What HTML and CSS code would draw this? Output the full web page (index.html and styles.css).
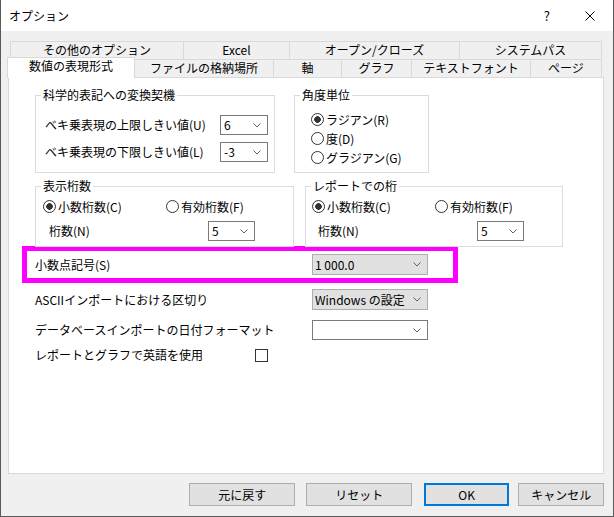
FILE: index.html
```html
<!DOCTYPE html>
<html lang="ja">
<head>
  <meta charset="UTF-8">
  <meta name="viewport" content="width=device-width, initial-scale=1.0">
  <title>オプション</title>
  <link rel="stylesheet" href="styles.css">
</head>
<body>
  <div class="window">
    <div class="titlebar">
      <span class="title">オプション</span>
      <span class="help">?</span>
      <svg class="close" width="10" height="10" viewBox="0 0 10 10">
        <path d="M0.5 0.5 L9.5 9.5 M9.5 0.5 L0.5 9.5" stroke="#000" stroke-width="1" fill="none"/>
      </svg>
    </div>

    <div class="content">
      <div class="tab-row row-back">
        <div class="tab">その他のオプション</div>
        <div class="tab">Excel</div>
        <div class="tab">オープン/クローズ</div>
        <div class="tab">システムパス</div>
      </div>
      <div class="tab-row row-front">
        <div class="tab active">数値の表現形式</div>
        <div class="tab">ファイルの格納場所</div>
        <div class="tab">軸</div>
        <div class="tab">グラフ</div>
        <div class="tab">テキストフォント</div>
        <div class="tab">ページ</div>
      </div>

      <div class="page">
        <div class="group-row">
          <div class="group group-sci">
            <span class="group-title">科学的表記への変換契機</span>
            <div class="group-field">
              <span class="field-label">ベキ乗表現の上限しきい値(U)</span>
              <div class="combo combo-small"><span>6</span><svg class="chev" width="8" height="5" viewBox="0 0 8 5"><polyline points="0.5,0.5 4,4 7.5,0.5" fill="none" stroke="#606060"/></svg></div>
            </div>
            <div class="group-field">
              <span class="field-label">ベキ乗表現の下限しきい値(L)</span>
              <div class="combo combo-small"><span>-3</span><svg class="chev" width="8" height="5" viewBox="0 0 8 5"><polyline points="0.5,0.5 4,4 7.5,0.5" fill="none" stroke="#606060"/></svg></div>
            </div>
          </div>

          <div class="group group-angle">
            <span class="group-title">角度単位</span>
            <div class="radio-item"><span class="radio checked"></span>ラジアン(R)</div>
            <div class="radio-item"><span class="radio"></span>度(D)</div>
            <div class="radio-item"><span class="radio"></span>グラジアン(G)</div>
          </div>
        </div>

        <div class="group-row row-digits">
          <div class="group group-digits">
            <span class="group-title">表示桁数</span>
            <div class="radio-line">
              <div class="radio-item first"><span class="radio checked"></span>小数桁数(C)</div>
              <div class="radio-item"><span class="radio"></span>有効桁数(F)</div>
            </div>
            <div class="digits-row">
              <span class="digits-label">桁数(N)</span>
              <div class="combo combo-digits"><span>5</span><svg class="chev" width="8" height="5" viewBox="0 0 8 5"><polyline points="0.5,0.5 4,4 7.5,0.5" fill="none" stroke="#606060"/></svg></div>
            </div>
          </div>

          <div class="group group-report">
            <span class="group-title">レポートでの桁</span>
            <div class="radio-line">
              <div class="radio-item first"><span class="radio checked"></span>小数桁数(C)</div>
              <div class="radio-item"><span class="radio"></span>有効桁数(F)</div>
            </div>
            <div class="digits-row">
              <span class="digits-label">桁数(N)</span>
              <div class="combo combo-digits"><span>5</span><svg class="chev" width="8" height="5" viewBox="0 0 8 5"><polyline points="0.5,0.5 4,4 7.5,0.5" fill="none" stroke="#606060"/></svg></div>
            </div>
          </div>
        </div>

        <div class="highlight">
          <span class="row-label">小数点記号(S)</span>
          <div class="combo combo-wide gray"><span>1 000.0</span><svg class="chev" width="8" height="5" viewBox="0 0 8 5"><polyline points="0.5,0.5 4,4 7.5,0.5" fill="none" stroke="#606060"/></svg></div>
        </div>

        <div class="field-row row-ascii">
          <span class="row-label">ASCIIインポートにおける区切り</span>
          <div class="combo combo-wide gray"><span>Windows の設定</span><svg class="chev" width="8" height="5" viewBox="0 0 8 5"><polyline points="0.5,0.5 4,4 7.5,0.5" fill="none" stroke="#606060"/></svg></div>
        </div>

        <div class="field-row row-date">
          <span class="row-label">データベースインポートの日付フォーマット</span>
          <div class="combo combo-wide"><span></span><svg class="chev" width="8" height="5" viewBox="0 0 8 5"><polyline points="0.5,0.5 4,4 7.5,0.5" fill="none" stroke="#606060"/></svg></div>
        </div>

        <div class="field-row row-check">
          <span class="check-label">レポートとグラフで英語を使用</span>
          <span class="checkbox"></span>
        </div>
      </div>

      <div class="buttons">
        <button class="btn btn-undo">元に戻す</button>
        <button class="btn btn-reset">リセット</button>
        <button class="btn btn-ok">OK</button>
        <button class="btn btn-cancel">キャンセル</button>
      </div>
    </div>
  </div>
</body>
</html>
```

FILE: styles.css
```css
body {
  margin: 0;
  font-family: "Noto Sans CJK JP", "Noto Sans", sans-serif;
  font-size: 12px;
  line-height: 14px;
  color: #000;
}
.window {
  width: 614px;
  height: 517px;
  box-sizing: border-box;
  border: 1px solid #5a5a5a;
  border-top: none;
  background: #f0f0f0;
}
.titlebar {
  height: 31px;
  background: #fff;
  display: flex;
  align-items: center;
  padding-left: 8px;
}
.title {
  flex: 1;
}
.help {
  margin-right: 35px;
  font-size: 13px;
}
.close {
  margin-right: 18px;
}
.content {
  padding: 10px 9px 0 7px;
}
.tab-row {
  display: flex;
  height: 18px;
}
.tab {
  box-sizing: border-box;
  height: 18px;
  text-align: center;
  line-height: 16px;
  white-space: nowrap;
  border-top: 1px solid #d9d9d9;
}
.row-back {
  margin-left: 2px;
}
.row-back .tab {
  border-left: 1px solid #d9d9d9;
}
.row-back .tab:last-child {
  border-right: 1px solid #d9d9d9;
}
.row-back .tab:nth-child(1) { width: 173px; }
.row-back .tab:nth-child(2) { width: 106px; }
.row-back .tab:nth-child(3) { width: 170px; }
.row-back .tab:nth-child(4) { width: 143px; }

.row-front {
  margin-left: -1px;
}
.row-front .tab {
  border-right: 1px solid #d9d9d9;
}
.row-front .tab:nth-child(1) { width: 128px; }
.row-front .tab:nth-child(2) { width: 139px; }
.row-front .tab:nth-child(3) { width: 68px; }
.row-front .tab:nth-child(4) { width: 70px; }
.row-front .tab:nth-child(5) { width: 119px; }
.row-front .tab:nth-child(6) { width: 71px; }
.row-front .tab.active {
  position: relative;
  z-index: 1;
  height: 21px;
  margin-top: -2px;
  background: #fff;
  border-left: 1px solid #d9d9d9;
}

.page {
  height: 397px;
  box-sizing: border-box;
  border: 1px solid #d9d9d9;
  background: #fff;
  padding: 17px 0 0 26px;
}
.group-row {
  display: flex;
  gap: 19px;
}
.group {
  position: relative;
  box-sizing: border-box;
  border: 1px solid #dcdcdc;
}
.group-title {
  position: absolute;
  left: 5px;
  top: -8px;
  padding: 0 2px;
  background: #fff;
  white-space: nowrap;
}
.group-sci {
  width: 240px;
  padding: 19px 0 10px 9px;
}
.group-field {
  display: flex;
  align-items: center;
  height: 20px;
}
.group-field + .group-field {
  margin-top: 7px;
}
.field-label {
  width: 175px;
  white-space: nowrap;
}
.group-angle {
  width: 135px;
  padding: 14px 0 5px 16px;
}
.radio-item {
  display: flex;
  align-items: center;
  height: 19px;
  white-space: nowrap;
}
.radio {
  width: 13px;
  height: 13px;
  box-sizing: border-box;
  border: 1px solid #333;
  border-radius: 50%;
  background: #fff;
  margin-right: 2px;
}
.radio.checked {
  background: radial-gradient(circle, #333 0 3px, #fff 3.6px);
}

.row-digits {
  margin-top: 13px;
  gap: 11px;
}
.group-digits {
  width: 259px;
  padding: 10px 0 5px 7px;
}
.group-report {
  width: 258px;
  padding: 10px 0 5px 6px;
}
.radio-line {
  display: flex;
}
.radio-item.first {
  width: 123px;
}
.digits-row {
  display: flex;
  align-items: center;
  height: 20px;
  margin-top: 5px;
}
.digits-label {
  margin-left: 6px;
  width: 159px;
}

.combo {
  box-sizing: border-box;
  display: flex;
  align-items: center;
  justify-content: space-between;
  height: 20px;
  border: 1px solid #7a7a7a;
  background: #fff;
  padding: 0 6px 0 3px;
  white-space: nowrap;
}
.combo.gray {
  height: 21px;
  background: #e1e1e1;
  border-color: #adadad;
  padding-left: 2px;
}
.combo-small {
  width: 48px;
}
.combo-digits {
  width: 47px;
}
.combo-wide {
  width: 116px;
}

.highlight {
  display: flex;
  align-items: center;
  box-sizing: border-box;
  width: 436px;
  margin: -1px 0 0 -13px;
  border: 5px solid #ff00ff;
  padding: 3px 0 3px 8px;
}
.row-label {
  width: 277px;
  white-space: nowrap;
}
.field-row {
  display: flex;
  align-items: center;
}
.row-ascii {
  margin-top: 6px;
  height: 21px;
}
.row-date {
  margin-top: 10px;
  height: 20px;
}
.row-check {
  margin-top: 7px;
  height: 16px;
}
.check-label {
  width: 220px;
}
.checkbox {
  width: 13px;
  height: 13px;
  box-sizing: border-box;
  border: 1px solid #333;
  background: #fff;
}

.buttons {
  display: flex;
  margin-top: 9px;
  padding-left: 181px;
}
.btn {
  box-sizing: border-box;
  height: 23px;
  background: #e1e1e1;
  border: 1px solid #adadad;
  font-family: inherit;
  font-size: 12px;
  padding: 0;
  color: #000;
}
.btn-undo { width: 107px; }
.btn-reset { width: 106px; margin-left: 11px; }
.btn-ok { width: 86px; margin-left: 12px; border: 2px solid #0078d7; }
.btn-cancel { width: 86px; margin-left: 9px; }
```
